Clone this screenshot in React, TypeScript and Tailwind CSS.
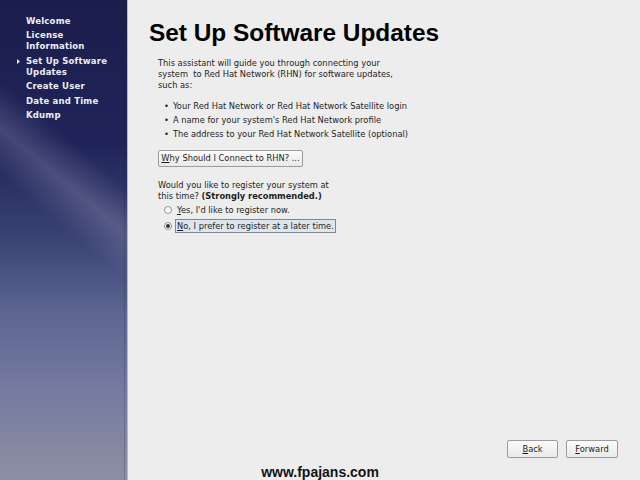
import React from 'react';

const steps = [
  { label: ['Welcome'] },
  { label: ['License', 'Information'] },
  { label: ['Set Up Software', 'Updates'], current: true },
  { label: ['Create User'] },
  { label: ['Date and Time'] },
  { label: ['Kdump'] },
];

const bullets = [
  "Your Red Hat Network or Red Hat Network Satellite login",
  "A name for your system's Red Hat Network profile",
  'The address to your Red Hat Network Satellite (optional)',
];

const Radio: React.FC<{ checked?: boolean }> = ({ checked }) => (
  <span className="flex h-[8px] w-[8px] shrink-0 items-center justify-center rounded-full border border-[#8f8f8f] bg-white">
    {checked && <span className="h-[4px] w-[4px] rounded-full bg-[#303030]" />}
  </span>
);

export default function App() {
  return (
    <div className="relative flex h-[480px] w-[640px] overflow-hidden bg-[#ededed] font-['DejaVu_Sans',sans-serif] text-[8.3px] text-[#1e1e1e]">
      {/* Sidebar with the step list */}
      <aside className="relative w-[128px] shrink-0 border-r border-[#b4b5cc] bg-[linear-gradient(180deg,#1b1d4b_0%,#20245a_30%,#3b4374_50%,#5d6591_65%,#767ca1_82%,#8c8fa3_100%)]">
        <div className="absolute inset-0 bg-[linear-gradient(40deg,transparent_52%,rgba(200,195,215,0.22)_60%,transparent_68%)]" />
        <div className="absolute inset-y-0 right-[2px] w-px bg-[#141838]/20" />
        <ul className="relative flex flex-col gap-[3.5px] pt-[15.5px] pl-[26px] text-[8.5px] font-bold leading-[11px] tracking-[0.2px] text-[#eceef6]">
          {steps.map((s) => (
            <li key={s.label[0]} className="relative">
              {s.current && (
                <svg className="absolute left-[-9px] top-[3px]" width="3" height="5" viewBox="0 0 3 5">
                  <path d="M0 0 L3 2.5 L0 5 Z" fill="#eceef6" />
                </svg>
              )}
              {s.label.map((l) => (
                <div key={l}>{l}</div>
              ))}
            </li>
          ))}
        </ul>
      </aside>

      {/* Main page */}
      <main className="flex flex-1 flex-col pl-[21px] pr-[22px] pb-[22px]">
        <h1 className="mt-[18.5px] font-['Liberation_Sans',Arial,sans-serif] text-[24.4px] font-bold leading-[28px] text-black">
          Set Up Software Updates
        </h1>

        <div className="flex flex-col pl-[9px]">
          <p className="mt-[11.5px] w-[250px] leading-[11px]">
            This assistant will guide you through connecting your<br />system&nbsp; to Red Hat Network (RHN) for software updates, such as:
          </p>

          <ul className="mt-[7.5px] flex flex-col pl-[6px] leading-[14px]">
            {bullets.map((b) => (
              <li key={b} className="flex gap-[4px]">
                <span>•</span>
                <span>{b}</span>
              </li>
            ))}
          </ul>

          <button className="mt-[9px] flex h-[17px] w-[145px] items-center justify-center rounded-[2px] border border-[#9c9c9c] bg-[linear-gradient(180deg,#fbfbfb,#e9e9e9)]">
            <span>
              <span className="underline">W</span>hy Should I Connect to RHN? ...
            </span>
          </button>

          <p className="mt-[13.5px] leading-[11px]">
            Would you like to register your system at
            <br />
            this time? <b>(Strongly recommended.)</b>
          </p>

          <div className="mt-[1px] flex flex-col gap-[2px] pl-[6px]">
            <label className="flex h-[14px] items-center gap-[3px]">
              <Radio />
              <span className="px-[2px]">
                <span className="underline">Y</span>es, I'd like to register now.
              </span>
            </label>
            <label className="flex h-[14px] items-center gap-[3px]">
              <Radio checked />
              <span className="flex h-[14px] items-center border border-[#7c8794] bg-[#dfe5ec] px-[1px]">
                <span className="underline">N</span>o, I prefer to register at a later time.
              </span>
            </label>
          </div>
        </div>

        <div className="mt-auto flex justify-end gap-[8px]">
          <button className="h-[18px] w-[51px] rounded-[2px] border border-[#9c9c9c] bg-[linear-gradient(180deg,#fbfbfb,#e9e9e9)]">
            <span className="underline">B</span>ack
          </button>
          <button className="h-[18px] w-[52px] rounded-[2px] border border-[#9c9c9c] bg-[linear-gradient(180deg,#fbfbfb,#e9e9e9)]">
            <span className="underline">F</span>orward
          </button>
        </div>
      </main>

      {/* Watermark */}
      <div className="absolute bottom-[0px] left-0 right-0 text-center font-['Liberation_Sans',Arial,sans-serif] text-[14px] font-bold leading-[16px] text-[#141414]">
        www.fpajans.com
      </div>
    </div>
  );
}
